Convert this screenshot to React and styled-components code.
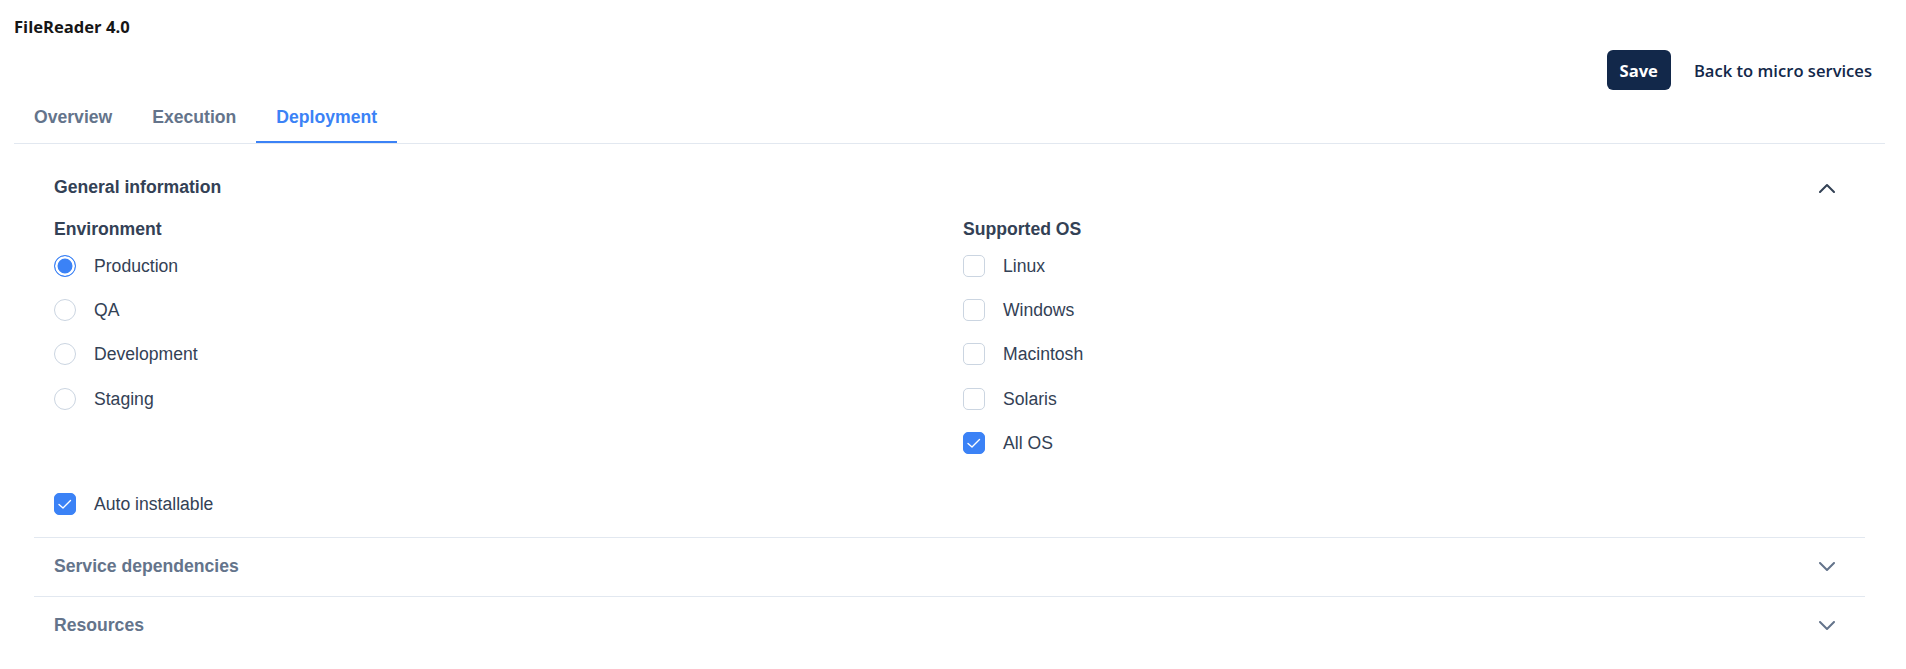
import React, { useState } from "react";
import styled, { createGlobalStyle } from "styled-components";

const GlobalStyle = createGlobalStyle`
  * { box-sizing: border-box; }
  body {
    margin: 0;
    background: #ffffff;
    font-family: "Liberation Sans", Arial, sans-serif;
  }
`;

const Page = styled.div`
  padding: 16px 21px 0 14px;
`;

const Title = styled.h1`
  margin: 0;
  font-family: "Open Sans", "Liberation Sans", sans-serif;
  font-size: 16.6px;
  font-weight: 700;
  line-height: 22px;
  color: #161616;
`;

const Actions = styled.div`
  display: flex;
  justify-content: flex-end;
  align-items: center;
  gap: 11px;
  margin-top: 12px;
`;

const SaveButton = styled.button`
  height: 40px;
  padding: 0 13px;
  border: none;
  border-radius: 6px;
  background: #12284a;
  color: #ffffff;
  font-family: "Open Sans", "Liberation Sans", sans-serif;
  font-size: 16.6px;
  font-weight: 700;
  cursor: pointer;
`;

const LinkButton = styled.button`
  height: 40px;
  padding: 0 13px 0 12px;
  border: none;
  background: transparent;
  color: #12284a;
  font-family: "Open Sans", "Liberation Sans", sans-serif;
  font-size: 16.6px;
  font-weight: 600;
  cursor: pointer;
`;

const TabList = styled.div`
  display: flex;
  border-bottom: 1px solid #e2e8f0;
`;

const Tab = styled.button`
  padding: 17px 20px 14px;
  border: none;
  border-bottom: 2px solid ${(p) => (p.$active ? "#3b82f6" : "transparent")};
  background: transparent;
  color: ${(p) => (p.$active ? "#3b82f6" : "#64748b")};
  font-family: "Liberation Sans", Arial, sans-serif;
  font-size: 17.6px;
  font-weight: 700;
  line-height: 20px;
  cursor: pointer;
`;

const Accordion = styled.div`
  margin: 14px 20px 0;
`;

const Item = styled.section`
  border-top: ${(p) => (p.$first ? "none" : "1px solid #e2e8f0")};
`;

const Header = styled.div`
  display: flex;
  align-items: center;
  justify-content: space-between;
  height: ${(p) => (p.$first ? "59px" : "58px")};
  padding: 0 30px 0 20px;
  cursor: pointer;
`;

const HeaderTitle = styled.h2`
  margin: 0;
  font-size: 17.6px;
  font-weight: 700;
  color: ${(p) => (p.$open ? "#334155" : "#64748b")};
`;

const Body = styled.div`
  padding: 2px 20px 22px;
`;

const FieldGrid = styled.div`
  display: grid;
  grid-template-columns: 1fr 1fr;
  column-gap: 27px;
`;

const FieldGroup = styled.div`
  display: flex;
  flex-direction: column;
`;

const GroupLabel = styled.div`
  font-size: 17.6px;
  font-weight: 700;
  line-height: 20px;
  color: #334155;
  margin-bottom: 16px;
`;

const OptionList = styled.div`
  display: flex;
  flex-direction: column;
  gap: 22.2px;
`;

const OptionRow = styled.label`
  display: flex;
  align-items: center;
  gap: 18px;
  height: 22px;
  margin-top: ${(p) => p.$mt || 0};
  cursor: pointer;
`;

const OptionLabel = styled.span`
  font-size: 17.6px;
  color: #334155;
  line-height: 20px;
`;

const RadioMark = styled.span`
  flex: none;
  width: 22px;
  height: 22px;
  border-radius: 50%;
  border: ${(p) => (p.$checked ? "1.5px solid #3b82f6" : "1px solid #cbd5e1")};
  background: ${(p) => (p.$checked ? "#3b82f6" : "#ffffff")};
  box-shadow: ${(p) => (p.$checked ? "inset 0 0 0 2.5px #ffffff" : "none")};
`;

const CheckMark = styled.span`
  flex: none;
  display: flex;
  align-items: center;
  justify-content: center;
  width: 22px;
  height: 22px;
  border-radius: 5px;
  border: 1px solid ${(p) => (p.$checked ? "#3b82f6" : "#cbd5e1")};
  background: ${(p) => (p.$checked ? "#3b82f6" : "#ffffff")};
`;

const Chevron = ({ up, color }) => (
  <svg width="16" height="10" viewBox="0 0 16 10" fill="none">
    <polyline
      points={up ? "1,9 8,2 15,9" : "1,1 8,8 15,1"}
      stroke={color}
      strokeWidth="2"
      strokeLinecap="round"
      strokeLinejoin="round"
    />
  </svg>
);

const Radio = ({ checked, label }) => (
  <OptionRow>
    <RadioMark $checked={checked} />
    <OptionLabel>{label}</OptionLabel>
  </OptionRow>
);

const Checkbox = ({ checked, label, mt }) => (
  <OptionRow $mt={mt}>
    <CheckMark $checked={checked}>
      {checked && (
        <svg width="20" height="20" viewBox="0 0 20 20" fill="none">
          <polyline
            points="4,10.5 8,14 15.5,6.5"
            stroke="#ffffff"
            strokeWidth="1.4"
            strokeLinecap="round"
            strokeLinejoin="round"
          />
        </svg>
      )}
    </CheckMark>
    <OptionLabel>{label}</OptionLabel>
  </OptionRow>
);

const environments = ["Production", "QA", "Development", "Staging"];
const osList = [
  { name: "Linux", checked: false },
  { name: "Windows", checked: false },
  { name: "Macintosh", checked: false },
  { name: "Solaris", checked: false },
  { name: "All OS", checked: true },
];

export default function App() {
  const [tab] = useState("Deployment");
  return (
    <>
      <GlobalStyle />
      <Page>
        <Title>FileReader 4.0</Title>
        <Actions>
          <SaveButton>Save</SaveButton>
          <LinkButton>Back to micro services</LinkButton>
        </Actions>
        <TabList>
          {["Overview", "Execution", "Deployment"].map((t) => (
            <Tab key={t} $active={t === tab}>
              {t}
            </Tab>
          ))}
        </TabList>
        <Accordion>
          <Item $first>
            <Header $first>
              <HeaderTitle $open>General information</HeaderTitle>
              <Chevron up color="#334155" />
            </Header>
            <Body>
              <FieldGrid>
                <FieldGroup>
                  <GroupLabel>Environment</GroupLabel>
                  <OptionList>
                    {environments.map((e) => (
                      <Radio key={e} label={e} checked={e === "Production"} />
                    ))}
                  </OptionList>
                </FieldGroup>
                <FieldGroup>
                  <GroupLabel>Supported OS</GroupLabel>
                  <OptionList>
                    {osList.map((o) => (
                      <Checkbox key={o.name} label={o.name} checked={o.checked} />
                    ))}
                  </OptionList>
                </FieldGroup>
              </FieldGrid>
              <Checkbox label="Auto installable" checked mt="39px" />
            </Body>
          </Item>
          <Item>
            <Header>
              <HeaderTitle>Service dependencies</HeaderTitle>
              <Chevron color="#64748b" />
            </Header>
          </Item>
          <Item>
            <Header>
              <HeaderTitle>Resources</HeaderTitle>
              <Chevron color="#64748b" />
            </Header>
          </Item>
        </Accordion>
      </Page>
    </>
  );
}
